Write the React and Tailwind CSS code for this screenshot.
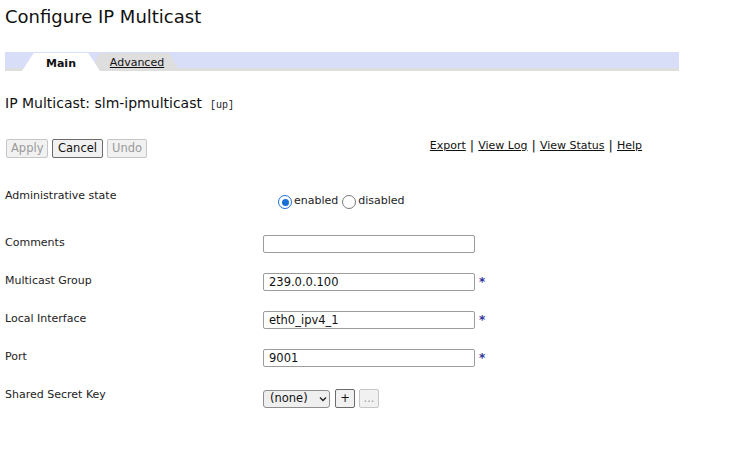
import React from "react";

const font = "font-['DejaVu_Sans',Verdana,sans-serif]";

const fields = [
  { label: "Comments", value: "", required: false },
  { label: "Multicast Group", value: "239.0.0.100", required: true },
  { label: "Local Interface", value: "eth0_ipv4_1", required: true },
  { label: "Port", value: "9001", required: true },
];

const Radio = ({ checked, label }) => (
  <label className="flex items-center">
    {checked ? (
      <span className="w-[14px] h-[14px] rounded-full border-[1.5px] border-[#1a6fd6] flex items-center justify-center bg-white">
        <span className="w-[7px] h-[7px] rounded-full bg-[#1a6fd6]" />
      </span>
    ) : (
      <span className="w-[14px] h-[14px] rounded-full border-[1.5px] border-[#7a7a7a] bg-white" />
    )}
    <span className="ml-[2px] -mt-[4px]">{label}</span>
  </label>
);

const Btn = ({ children, disabled, active, className = "" }) => (
  <button
    className={
      "h-[19px] px-[4px] rounded-[2px] border bg-[#f1f1f1] text-[11.5px] leading-none " +
      (active ? "border-[#6b6b6b] text-[#111] " : "border-[#c6c6c6] ") +
      (disabled ? "text-[#9a9a9a] " : "text-[#111] ") +
      className
    }
  >
    {children}
  </button>
);

export default function App() {
  return (
    <div className={`${font} w-[738px] h-[464px] bg-white text-[#222] px-[5px] pt-[6px]`}>
      <h1 className="text-[18px] leading-[22px] text-[#111]">Configure IP Multicast</h1>

      {/* tab strip */}
      <div className="mt-[24px] w-[674px] h-[19px] bg-[linear-gradient(to_bottom,#d8ddf8_16px,#dedede_16px)] flex items-end">
        <div className="relative z-10 ml-[17px] w-[78px] h-[18px] pt-[5px] bg-white [clip-path:polygon(0_100%,15%_0,85%_0,100%_100%)] flex items-center justify-center text-[11px] font-bold text-[#111]">
          Main
        </div>
        <div className="-ml-[10px] w-[90px] h-[18px] pt-[3px] bg-[#dedede] [clip-path:polygon(0_100%,11%_0,88%_0,100%_100%)] flex items-center justify-center text-[11px] text-[#111]">
          <span className="underline ml-[4px]">Advanced</span>
        </div>
      </div>

      <div className="mt-[24px] flex items-baseline">
        <span className="text-[14px] leading-[17px] text-[#111]">IP Multicast: slm-ipmulticast</span>
        <span className="ml-[8px] text-[10px] font-['Liberation_Mono',monospace]">[up]</span>
      </div>

      <div className="mt-[26px] w-[637px] flex items-center">
        <Btn disabled className="ml-[1px] w-[42px]">Apply</Btn>
        <Btn active className="ml-[4px] w-[51px]">Cancel</Btn>
        <Btn disabled className="ml-[4px] w-[40px]">Undo</Btn>
        <div className="ml-auto -mt-[5px] text-[11px] text-[#111] flex items-center gap-[4px]">
          <a className="underline">Export</a>
          <span className="text-[13px]">|</span>
          <a className="underline">View Log</a>
          <span className="text-[13px]">|</span>
          <a className="underline">View Status</a>
          <span className="text-[13px]">|</span>
          <a className="underline">Help</a>
        </div>
      </div>

      <div className="mt-[31px] text-[11px] leading-[13px]">
        <div className="flex items-start h-[47px]">
          <div className="w-[258px]">Administrative state</div>
          <div className="ml-[15px] mt-[6px] flex items-center gap-[4px]">
            <Radio checked label="enabled" />
            <Radio label="disabled" />
          </div>
        </div>

        {fields.map((f) => (
          <div key={f.label} className="flex items-start h-[38px]">
            <div className="w-[258px]">{f.label}</div>
            <input
              readOnly
              value={f.value}
              className="-mt-[1px] w-[212px] h-[18px] border border-[#9c9c9c] rounded-[2px] px-[5px] text-[11.5px] text-[#111] outline-none"
            />
            {f.required && <span className="ml-[4px] mt-[2px] text-[12px] font-bold text-[#333399]">*</span>}
          </div>
        ))}

        <div className="flex items-start">
          <div className="w-[258px]">Shared Secret Key</div>
          <div className="mt-[1px] flex items-center">
            <div className="w-[67px] h-[18px] border border-[#8e8e8e] rounded-[3px] bg-[#efefef] flex items-center pl-[6px] text-[11.5px] text-[#111]">
              <span>(none)</span>
              <svg className="ml-[11px]" width="8" height="6" viewBox="0 0 8 6">
                <path d="M1 1.5 L4 4.5 L7 1.5" fill="none" stroke="#222" strokeWidth="1.4" />
              </svg>
            </div>
            <Btn active className="ml-[5px] w-[20px] h-[18px] !px-0">+</Btn>
            <Btn disabled className="ml-[4px] w-[20px] h-[18px] !px-0">...</Btn>
          </div>
        </div>
      </div>
    </div>
  );
}
